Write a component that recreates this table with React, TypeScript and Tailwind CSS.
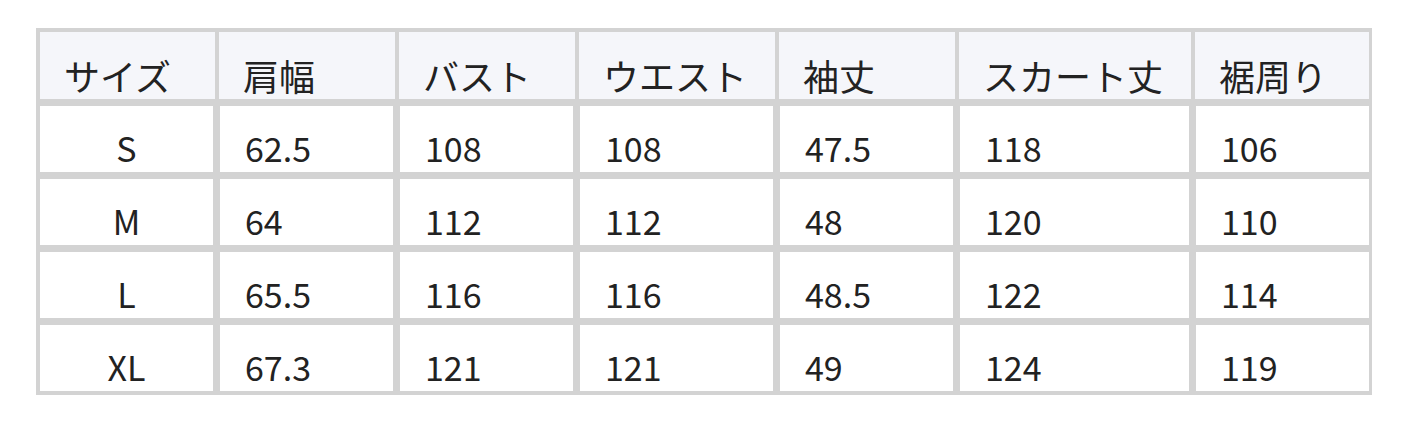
const headers = ["サイズ", "肩幅", "バスト", "ウエスト", "袖丈", "スカート丈", "裾周り"];

const rows = [
  ["S", "62.5", "108", "108", "47.5", "118", "106"],
  ["M", "64", "112", "112", "48", "120", "110"],
  ["L", "65.5", "116", "116", "48.5", "122", "114"],
  ["XL", "67.3", "121", "121", "49", "124", "119"],
];

const cols = "grid grid-cols-[175px_176px_176px_196px_176px_232px_174px] gap-x-[4px]";

export default function App() {
  return (
    <div
      className="bg-white w-[1408px] h-[422px] pt-[28px] pl-[36px] text-[#222]"
      style={{ fontFamily: '"Noto Sans CJK JP", "Noto Sans", sans-serif' }}
    >
      <div className="w-[1336px] bg-[#d3d3d3] p-[4px] flex flex-col gap-y-[7px]">
        <div className={cols}>
          {headers.map((h) => (
            <div
              key={h}
              className="h-[67px] bg-[#f5f6fa] flex items-center pl-[24px] pt-[18px] text-[36px] leading-none"
            >
              {h}
            </div>
          ))}
        </div>
        {rows.map((row) => (
          <div key={row[0]} className={cols}>
            {row.map((cell, i) => (
              <div
                key={i}
                className={`h-[66px] bg-white flex items-center pt-[18px] text-[34px] leading-none border-[#d3d3d3] ${
                  i === 0 ? "justify-center border-r-2" : "pl-[25px] border-l-1"
                } ${i > 0 && i < row.length - 1 ? "border-r-2" : ""}`}
              >
                {cell}
              </div>
            ))}
          </div>
        ))}
      </div>
    </div>
  );
}
